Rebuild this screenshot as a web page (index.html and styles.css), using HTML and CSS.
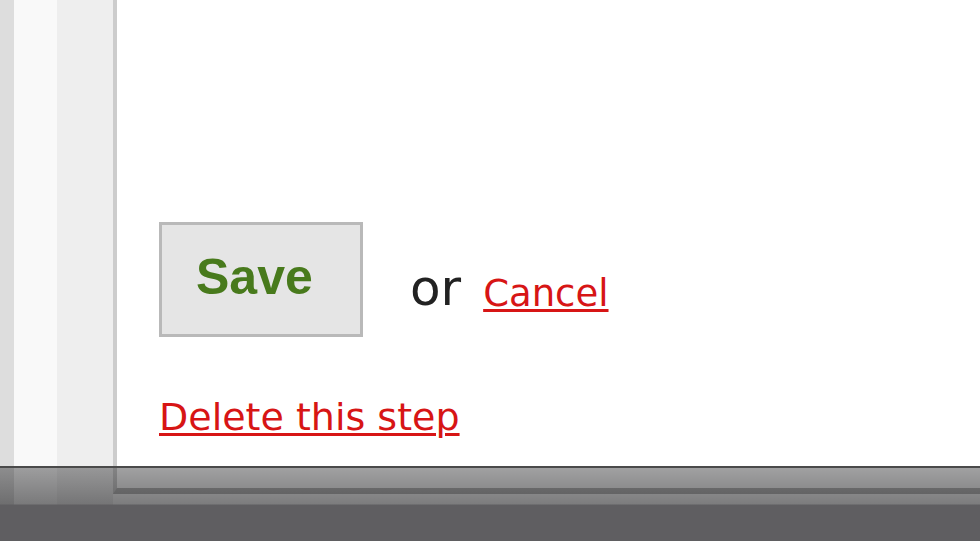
FILE: index.html
```html
<!DOCTYPE html>
<html lang="en">
<head>
  <meta charset="UTF-8" />
  <title>Edit step</title>
  <link rel="stylesheet" href="styles.css">
</head>
<body>
  <div class="page">
    <div class="rail rail-a"></div>
    <div class="rail rail-b"></div>
    <div class="rail rail-c"></div>

    <div class="sheet">
      <form class="step-form" onsubmit="return false">
        <div class="form-actions">
          <button type="submit" class="save">Save</button>
          <span class="or">or</span>
          <a href="#" class="cancel">Cancel</a>
        </div>
        <a href="#" class="delete">Delete this step</a>
      </form>
    </div>
  </div>

  <div class="dock"></div>
</body>
</html>
```

FILE: styles.css
```css
html, body {
  margin: 0;
  height: 541px;
  overflow: hidden;
  background: #ffffff;
}
.page {
  display: flex;
  align-items: flex-start;
  height: 541px;
}
.rail {
  align-self: stretch;
  flex: none;
}
.rail-a {
  width: 14px;
  background: #dddddd;
}
.rail-b {
  width: 43px;
  background: #f9f9f9;
}
.rail-c {
  width: 56px;
  background: #eeeeee;
}
.sheet {
  flex: 1;
  box-sizing: border-box;
  height: 494px;
  padding: 222px 0 0 42px;
  background: #ffffff;
  border-left: 4px solid #cccccc;
  border-bottom: 6px solid #b4b4b4;
}
.form-actions {
  display: flex;
  align-items: flex-start;
}
.save {
  box-sizing: border-box;
  width: 204px;
  height: 115px;
  padding: 27px 0 32px 34px;
  text-align: left;
  font-family: "Liberation Sans", Arial, sans-serif;
  font-size: 50px;
  font-weight: bold;
  line-height: 50px;
  color: #487a1c;
  background: #e5e5e5;
  border: 3px solid #b9b9b9;
  border-radius: 0;
  cursor: pointer;
}
.or {
  margin: 41px 0 0 47px;
  font-family: "DejaVu Sans", Verdana, sans-serif;
  font-size: 50px;
  line-height: 50px;
  color: #222222;
}
.cancel,
.delete {
  font-family: "DejaVu Sans", Verdana, sans-serif;
  color: #d71515;
  text-decoration: underline;
  text-decoration-thickness: 3px;
  text-underline-offset: 3px;
}
.cancel {
  margin: 53px 0 0 22px;
  font-size: 37px;
  line-height: 37px;
}
.delete {
  display: inline-block;
  margin-top: 61px;
  font-size: 38px;
  line-height: 38px;
}
.dock {
  position: absolute;
  left: 0;
  right: 0;
  bottom: 0;
  height: 75px;
  border-top: 2px solid #4a4a4a;
  box-sizing: border-box;
  background: linear-gradient(to bottom,
    rgba(30, 30, 32, 0.42) 0,
    rgba(30, 30, 32, 0.58) 36px,
    #5f5e61 37px,
    #5f5e61 100%);
}
```
